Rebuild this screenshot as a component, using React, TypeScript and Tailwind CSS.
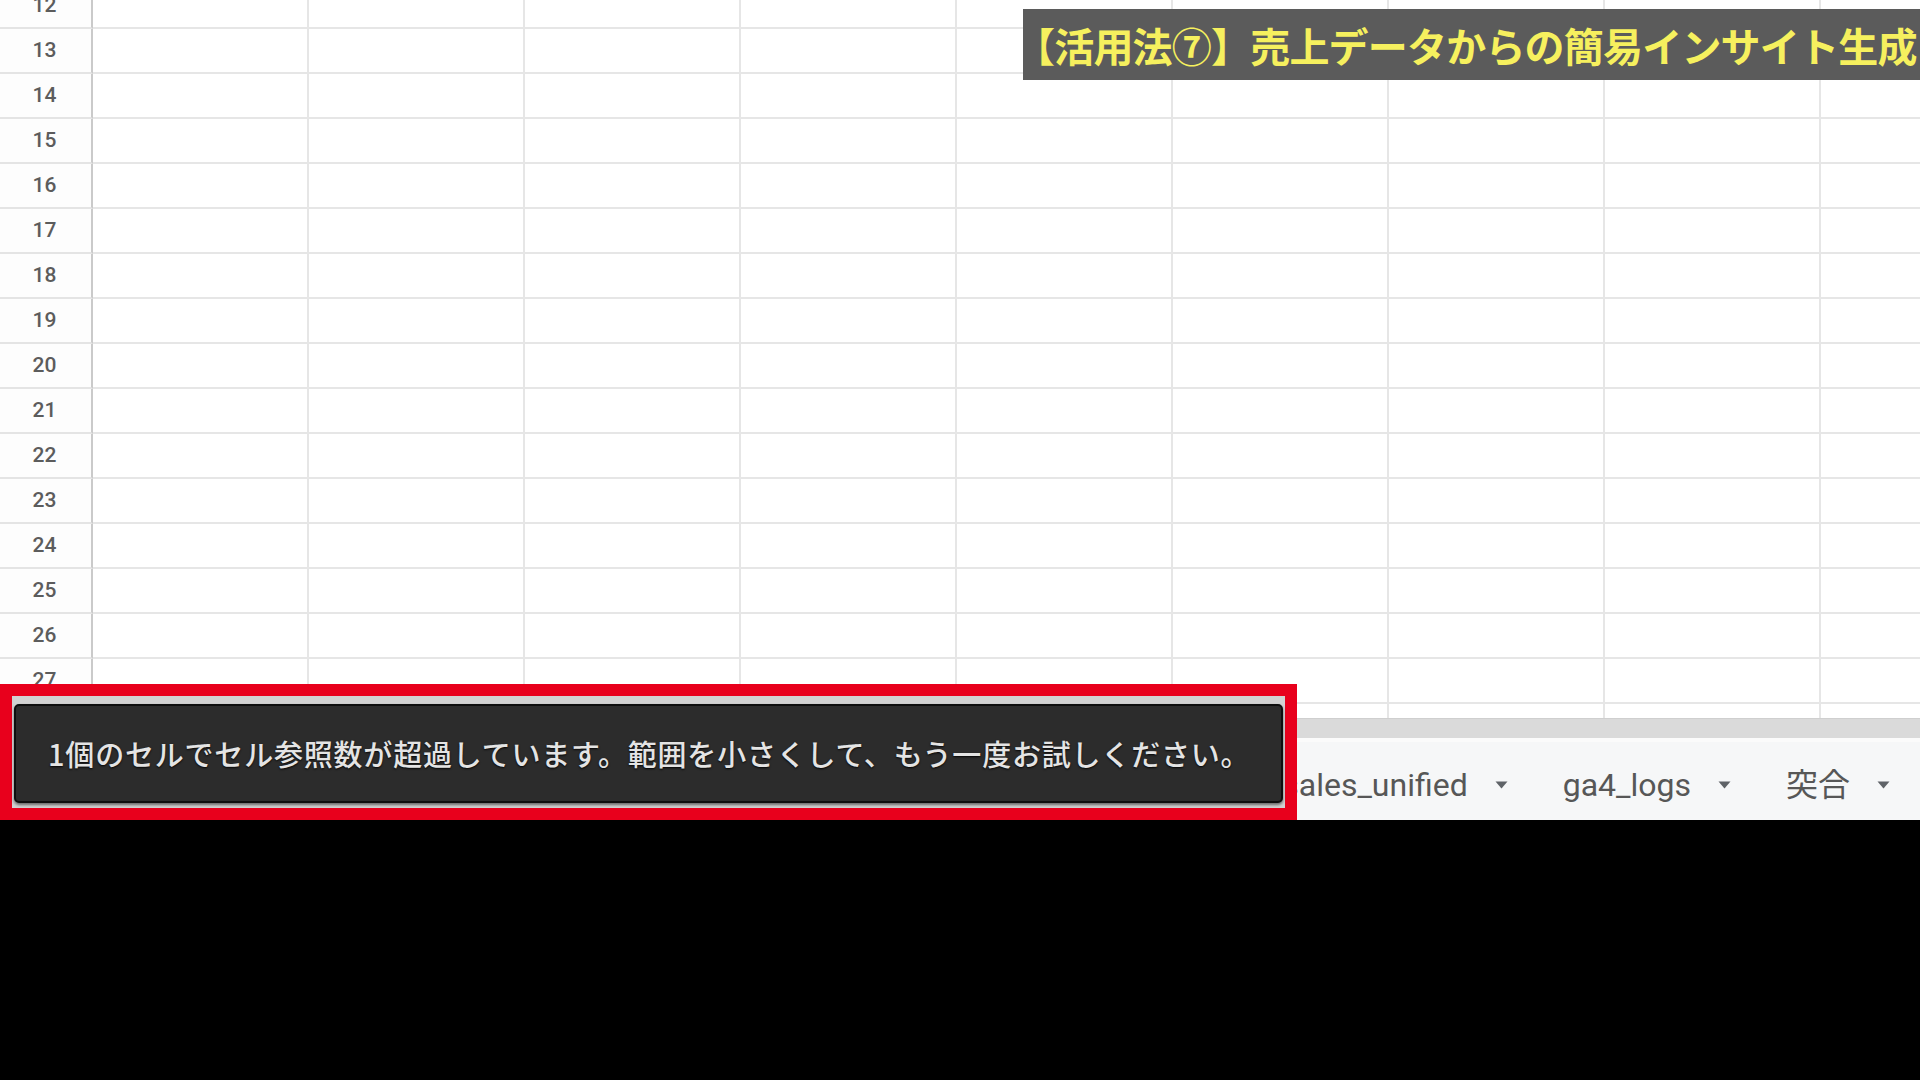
const JP = { fontFamily: '"Noto Sans CJK JP", "Noto Sans", sans-serif' };
const UI = { fontFamily: 'Roboto, "Noto Sans CJK JP", "Liberation Sans", sans-serif' };

function Caret() {
  return (
    <svg width="13" height="8" viewBox="0 0 13 8" className="shrink-0">
      <path d="M0.5 0.5 L12.5 0.5 L6.5 7.5 Z" fill="#5f6368" />
    </svg>
  );
}

function SheetTab({ label }: { label: string }) {
  return (
    <div className="flex items-center gap-[27px]">
      <span className="text-[32px] leading-none text-[#575757]" style={UI}>
        {label}
      </span>
      <Caret />
    </div>
  );
}

export default function App() {
  const rows = Array.from({ length: 17 }, (_, i) => 12 + i);
  const cols = Array.from({ length: 9 }, (_, i) => i);
  return (
    <div className="relative h-[1080px] w-[1920px] overflow-hidden bg-black">
      <div className="flex h-[820px] flex-col bg-white">
        <div className="h-[718px] overflow-hidden">
          <div className="-mt-[16px]">
            {rows.map((r) => (
              <div key={r} className="flex h-[45px]">
                <div
                  className="flex w-[93px] shrink-0 items-center justify-center border-b-2 border-r-2 border-b-[#e4e4e4] border-r-[#cacaca] bg-[#fdfdfd] pr-[2px] pt-[1px] text-[21px] font-medium text-[#5c5c5c]"
                  style={UI}
                >
                  {r}
                </div>
                {cols.map((c) => (
                  <div key={c} className="w-[216px] shrink-0 border-b-2 border-r-2 border-[#e6e6e6]" />
                ))}
              </div>
            ))}
          </div>
        </div>
        <div className="h-[20px] border-t border-[#cfcfcf] bg-[#dadada]" />
        <div className="flex h-[82px] items-center justify-end gap-[55px] border-t-4 border-[#fbfbfb] bg-[#f6f7f8] pr-[30px] pt-[8px]">
          <SheetTab label="sales_unified" />
          <SheetTab label="ga4_logs" />
          <SheetTab label="突合" />
        </div>
      </div>

      <div className="absolute left-0 top-[684px] h-[136px] w-[1297px] border-[12px] border-[#e8001c] bg-[#d2d2d2] px-[2px] pb-[5px] pt-[8px]">
        <div className="flex h-full items-center rounded-[5px] border-2 border-[#0e0e0e] bg-[#2c2c2c] pl-[32px] shadow-[0_2px_3px_rgba(0,0,0,0.5)]">
          <span
            className="whitespace-nowrap text-[29px] font-medium leading-none tracking-[0.8px] text-[#e4e4e4] [text-shadow:0_1px_2px_rgba(0,0,0,0.9)]"
            style={JP}
          >
            1個のセルでセル参照数が超過しています。範囲を小さくして、もう一度お試しください。
          </span>
        </div>
      </div>

      <div className="absolute left-[1023px] top-[9px] flex h-[71px] w-[897px] items-center overflow-hidden bg-[#5b5b5b]">
        <span
          className="-ml-[8px] whitespace-nowrap text-[40px] font-semibold leading-none tracking-[-0.8px] text-[#f6f05e]"
          style={JP}
        >
          【活用法⑦】売上データからの簡易インサイト生成
        </span>
      </div>
    </div>
  );
}
